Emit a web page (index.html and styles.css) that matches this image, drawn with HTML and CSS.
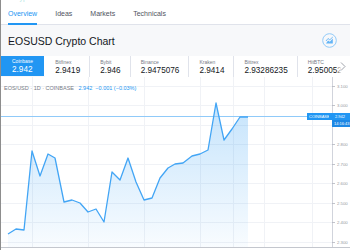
FILE: index.html
```html
<!DOCTYPE html>
<html lang="en">
<head>
    <meta charset="UTF-8">
    <meta name="viewport" content="width=device-width, initial-scale=1.0">
    <title>EOSUSD Crypto Chart</title>
    <link rel="stylesheet" href="styles.css">
</head>
<body>
    <div class="page">
        <div class="crumbs"><span><em>Cryptocurrencies</em> / EOS / USD markets</span></div>

        <nav class="tabs">
            <a class="tab active">Overview</a>
            <a class="tab">Ideas</a>
            <a class="tab">Markets</a>
            <a class="tab">Technicals</a>
        </nav>

        <header class="title-bar">
            <h1>EOSUSD Crypto Chart</h1>
            <span class="chart-icon">
                <svg width="15" height="15" viewBox="0 0 15 15">
                    <circle cx="7.5" cy="7.5" r="6.8" fill="none" stroke="#90caf9" stroke-width="1"/>
                    <path d="M4 10.5 L6 7.5 L7.8 8.8 L10.8 5.5 L10.8 10.5 Z" fill="#64b5f6"/>
                    <path d="M4 8 L6 5.5 L7.8 6.8 L10.8 4" fill="none" stroke="#64b5f6" stroke-width="0.9"/>
                </svg>
            </span>
        </header>

        <div class="exchanges">
            <div class="exchange active"><span class="name">Coinbase</span><span class="price">2.942</span></div>
            <div class="exchange"><span class="name">Bitfinex</span><span class="price">2.9419</span></div>
            <div class="exchange"><span class="name">Bybit</span><span class="price">2.946</span></div>
            <div class="exchange"><span class="name">Binance</span><span class="price">2.9475076</span></div>
            <div class="exchange"><span class="name">Kraken</span><span class="price">2.9414</span></div>
            <div class="exchange"><span class="name">Bittrex</span><span class="price">2.93286235</span></div>
            <div class="exchange"><span class="name">HitBTC</span><span class="price">2.950052</span></div>
            <button class="more">
                <svg width="6" height="9" viewBox="0 0 6 9"><path d="M1 0.5 L5 4.5 L1 8.5" fill="none" stroke="#9598a1" stroke-width="0.9"/></svg>
            </button>
        </div>

        <div class="chart">
            <div class="legend">
                <span class="symbol">EOS/USD · 1D · COINBASE</span>
                <span class="change">2.942 &nbsp;−0.001 (−0.03%)</span>
            </div>
            <svg class="plot" width="349" height="172" viewBox="1 78 349 172">
                <defs>
                    <linearGradient id="area" x1="0" y1="0" x2="0" y2="1">
                        <stop offset="0" stop-color="#2196f3" stop-opacity="0.26"/>
                        <stop offset="1" stop-color="#2196f3" stop-opacity="0.03"/>
                    </linearGradient>
                </defs>
                <g stroke="#f0f2f6" stroke-width="1">
                    <line x1="1" x2="332" y1="87.5" y2="87.5"/>
                    <line x1="1" x2="332" y1="106.5" y2="106.5"/>
                    <line x1="1" x2="332" y1="126.5" y2="126.5"/>
                    <line x1="1" x2="332" y1="145.5" y2="145.5"/>
                    <line x1="1" x2="332" y1="165.5" y2="165.5"/>
                    <line x1="1" x2="332" y1="184.5" y2="184.5"/>
                    <line x1="1" x2="332" y1="204.5" y2="204.5"/>
                    <line x1="1" x2="332" y1="223.5" y2="223.5"/>
                    <line x1="1" x2="332" y1="243.5" y2="243.5"/>
                    <line x1="32.5" x2="32.5" y1="78" y2="248"/>
                    <line x1="88.5" x2="88.5" y1="78" y2="248"/>
                    <line x1="144.5" x2="144.5" y1="78" y2="248"/>
                    <line x1="200.5" x2="200.5" y1="78" y2="248"/>
                    <line x1="233.5" x2="233.5" y1="78" y2="248"/>
                    <line x1="264.5" x2="264.5" y1="78" y2="248"/>
                    <line x1="312.5" x2="312.5" y1="78" y2="248"/>
                </g>
                <path fill="url(#area)" d="M8 235 L16 230 L24 231 L32 152 L40 177 L48 155 L55 159 L64 203 L72 201 L80 204 L88 213 L96 210 L104 223 L112 173 L120 181 L128 159 L136 183 L144 201 L152 199 L160 179 L168 169 L175 165 L183 164 L192 157 L200 155 L208 151 L216 104 L224 141 L232 130 L240 118 L248 118 L248 248 L8 248 Z"/>
                <line x1="1" x2="332" y1="117.5" y2="117.5" stroke="#90caf9" stroke-width="1"/>
                <path fill="none" stroke="#42a5f5" stroke-width="1.3" stroke-linejoin="round" d="M8 235 L16 230 L24 231 L32 152 L40 177 L48 155 L55 159 L64 203 L72 201 L80 204 L88 213 L96 210 L104 223 L112 173 L120 181 L128 159 L136 183 L144 201 L152 199 L160 179 L168 169 L175 165 L183 164 L192 157 L200 155 L208 151 L216 104 L224 141 L232 130 L240 118 L248 118"/>
                <line x1="332.5" x2="332.5" y1="78" y2="248" stroke="#d1d4dc" stroke-width="1"/>
                <line x1="1" x2="350" y1="248.5" y2="248.5" stroke="#c4c7ce" stroke-width="1"/>
                <g stroke="#b2b5be" stroke-width="0.8">
                    <line x1="332" x2="335" y1="87.5" y2="87.5"/>
                    <line x1="332" x2="335" y1="106.5" y2="106.5"/>
                    <line x1="332" x2="335" y1="145.5" y2="145.5"/>
                    <line x1="332" x2="335" y1="165.5" y2="165.5"/>
                    <line x1="332" x2="335" y1="184.5" y2="184.5"/>
                    <line x1="332" x2="335" y1="204.5" y2="204.5"/>
                    <line x1="332" x2="335" y1="223.5" y2="223.5"/>
                    <line x1="332" x2="335" y1="243.5" y2="243.5"/>
                </g>
                <g class="axis-label">
                    <text x="337" y="89">3.100</text>
                    <text x="337" y="108">3.000</text>
                    <text x="337" y="147">2.800</text>
                    <text x="337" y="167">2.700</text>
                    <text x="337" y="186">2.600</text>
                    <text x="337" y="206">2.500</text>
                    <text x="337" y="225">2.400</text>
                    <text x="337" y="245">2.300</text>
                </g>
                <rect x="307" y="114" width="22" height="7" fill="#2196f3"/>
                <text class="tag" x="309" y="119.3">COINBASE</text>
                <rect x="329" y="114" width="21" height="7" fill="#2196f3"/>
                <text class="tag" x="335" y="119.3">2.942</text>
                <rect x="332" y="121" width="18" height="7" fill="#1e88e5"/>
                <text class="tag" x="334" y="126.3">14:16:43</text>
            </svg>
        </div>
    </div>
</body>
</html>
```

FILE: styles.css
```css
* {
    box-sizing: border-box;
}

body {
    margin: 0;
    font-family: "Liberation Sans", Arial, sans-serif;
    background: #ffffff;
    color: #131722;
    overflow: hidden;
}

.page {
    width: 350px;
    height: 250px;
    border-left: 1px solid #8d8d8d;
    overflow: hidden;
}

.crumbs {
    height: 4px;
    overflow: hidden;
    padding-left: 11px;
}

.crumbs span {
    display: block;
    margin-top: -6px;
    font-size: 7px;
    line-height: 8px;
    color: #d1d4dc;
}

.crumbs em {
    font-style: normal;
    color: #b2e6e3;
}

.tabs {
    display: flex;
    gap: 18px;
    height: 21px;
    padding-left: 7px;
    border-bottom: 1px solid #e0e3eb;
}

.tab {
    font-size: 7px;
    line-height: 20px;
    color: #50535e;
    cursor: pointer;
}

.tab.active {
    color: #2196f3;
    border-bottom: 2px solid #2196f3;
    height: 21px;
}

.title-bar {
    display: flex;
    align-items: center;
    justify-content: space-between;
    height: 31px;
    padding: 0 13px 0 7px;
    background: #f7f8fa;
}

.title-bar h1 {
    margin: 0;
    font-size: 10.5px;
    font-weight: normal;
    color: #131722;
}

.chart-icon {
    display: flex;
}

.exchanges {
    position: relative;
    display: flex;
    height: 21px;
    background: #f7f8fa;
}

.exchange {
    display: flex;
    flex-direction: column;
    justify-content: center;
    padding: 0 9px 0 10px;
    background: #ffffff;
    border-right: 1px solid #e0e3eb;
    white-space: nowrap;
}

.exchange .name {
    font-size: 5px;
    line-height: 7px;
    color: #787b86;
}

.exchange .price {
    font-size: 8.2px;
    line-height: 9px;
    color: #131722;
}

.exchange.active {
    padding: 0 11px;
    background: #2196f3;
    border-right: 1px solid #ffffff;
    height: 20px;
}

.exchange.active .name,
.exchange.active .price {
    color: #ffffff;
}

.more {
    position: absolute;
    right: 0;
    top: 0;
    width: 14px;
    height: 21px;
    padding: 0;
    border: none;
    background: linear-gradient(to right, rgba(255, 255, 255, 0), #ffffff 40%);
    display: flex;
    align-items: center;
    justify-content: center;
}

.chart {
    position: relative;
    height: 172px;
}

.plot {
    display: block;
}

.legend {
    position: absolute;
    left: 3px;
    top: 8px;
    font-size: 5.5px;
    white-space: nowrap;
}

.legend .symbol {
    color: #787b86;
    margin-right: 3px;
}

.legend .change {
    color: #2196f3;
}

.axis-label {
    font-family: "Liberation Sans", Arial, sans-serif;
    font-size: 4.3px;
    fill: #9598a1;
}

.tag {
    font-family: "Liberation Sans", Arial, sans-serif;
    font-size: 4px;
    fill: #ffffff;
}
```
